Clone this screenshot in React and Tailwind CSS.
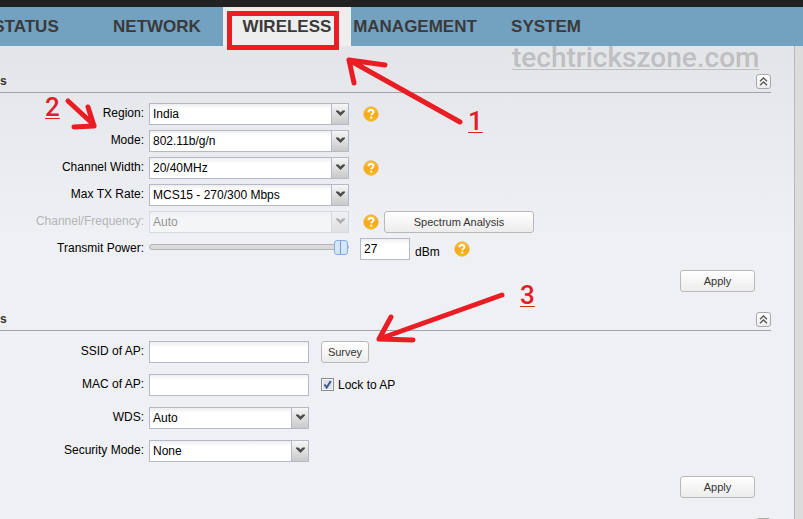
import React, { useState } from 'react';

const tabs = [
  { name: 'STATUS', width: 'w-[130px] -ml-[39px]' },
  { name: 'NETWORK', width: 'w-[132px]' },
  { name: 'WIRELESS', width: 'w-[128px]', active: true },
  { name: 'MANAGEMENT', width: 'w-[128px]' },
  { name: 'SYSTEM', width: 'w-[134px]' },
];

const buttonClass =
  'h-[22px] rounded-[3px] border border-[#b9b9b9] bg-gradient-to-b from-white to-[#ececec] text-[11px] leading-none text-[#333]';

const inputClass =
  'h-[22px] border border-[#b5b8c8] bg-white bg-gradient-to-b from-[#eeeeee] to-white to-25% px-[3px] text-[12px] text-black outline-none';

function Row({ id, label, disabled, children }) {
  return (
    <div className="flex items-center">
      <label
        htmlFor={id}
        className={`w-[144px] shrink-0 pb-[2px] text-right leading-4 ${disabled ? 'text-[#b4b4b6]' : 'text-black'}`}
      >
        {label}:
      </label>
      <div className="ml-[5px] flex h-[22px] items-center">{children}</div>
    </div>
  );
}

function SelectBox({ id, options, wide, disabled }) {
  return (
    <div className={`relative ${wide ? 'w-[200px]' : 'w-[160px]'} ${disabled ? 'opacity-40' : ''}`}>
      <select id={id} disabled={disabled} className={`${inputClass} block w-full appearance-none pr-5`}>
        {options.map((o) => (
          <option key={o}>{o}</option>
        ))}
      </select>
      <span className="pointer-events-none absolute inset-y-0 right-0 flex w-[18px] items-center justify-center border border-[#b5b8c8] bg-gradient-to-b from-[#f6f6f6] to-[#c9c9c9]">
        <svg className="mb-[2px]" width="9" height="6" viewBox="0 0 9 6">
          <path d="M0 0.500H2.500L4.500 2.500L6.500 0.500H9V1.500L4.500 6L0 1.500z" fill="#4a4a4a" />
        </svg>
      </span>
    </div>
  );
}

function Help() {
  return (
    <button type="button" aria-label="Help" className="block">
      <svg width="16" height="16" viewBox="0 0 16 16">
        <defs>
          <linearGradient id="amber" x1="0" y1="0" x2="0" y2="1">
            <stop offset="0" stopColor="#fbc53c" />
            <stop offset="0.500" stopColor="#f8a818" />
            <stop offset="1" stopColor="#fdbb10" />
          </linearGradient>
        </defs>
        <circle cx="8" cy="8" r="7.200" fill="url(#amber)" stroke="#e9a93a" strokeWidth="0.800" />
        <path d="M5.500 6.300C5.500 3.200 10.500 3.200 10.500 6.100C10.500 7.800 8.200 7.700 8.200 9.300" fill="none" stroke="#fff" strokeWidth="1.900" />
        <rect x="7.200" y="10.600" width="2" height="2" fill="#fff" />
      </svg>
    </button>
  );
}

function SectionHeader({ title, onToggle }) {
  return (
    <div className="mr-[23px] flex items-center justify-between border-b border-[#a2a2a8] pt-5 pb-[3px]">
      <h2 className="h-[15px] text-[12px] leading-[15px] font-bold text-[#333]">{title}</h2>
      <button
        type="button"
        aria-label="Collapse section"
        onClick={onToggle}
        className="flex size-[15px] items-center justify-center rounded-[3px] border border-[#a8a8a8] bg-gradient-to-b from-white to-[#eee]"
      >
        <svg width="9" height="9" viewBox="0 0 9 9" fill="none" stroke="#555" strokeWidth="1.300">
          <path d="M1 4.300L4.500 1L8 4.300M1 8.300L4.500 5L8 8.300" />
        </svg>
      </button>
    </div>
  );
}

function Apply({ className }) {
  return (
    <div className={`mr-[39px] flex justify-end ${className}`}>
      <button type="button" className={`${buttonClass} w-[75px]`}>Apply</button>
    </div>
  );
}

function Annotations() {
  return (
    <div className="pointer-events-none absolute inset-0 font-[Roboto,sans-serif] text-[26px] leading-none font-medium">
      <span className="absolute top-[44px] left-[512px] text-[28px] text-[#bfbfc2] underline decoration-1 underline-offset-[2px]">
        techtrickszone.com
      </span>
      <svg className="absolute top-0 left-0" width="803" height="519" fill="none" stroke="#ea1c24" strokeWidth="5" strokeLinecap="round" strokeLinejoin="round">
        <rect x="229.500" y="13.500" width="107" height="34" strokeLinejoin="miter" />
        <path d="M460 122L349 60L385 65M349 60L354 83" />
        <path d="M68 101L94 125M88 107L94 126L74 127" />
        <path d="M502 295L379 339L391 317M379 339L413 340" />
      </svg>
      <span className="absolute top-[94px] left-[45px] text-[#dd2029] underline decoration-1 underline-offset-[2px]">2</span>
      <span className="absolute top-[108px] left-[468px] text-[#dd2029] underline decoration-1 underline-offset-[2px]">1</span>
      <span className="absolute top-[282px] left-[520px] text-[#dd2029] underline decoration-1 underline-offset-[2px]">3</span>
    </div>
  );
}

export default function App() {
  const [power, setPower] = useState(27);
  const [locked, setLocked] = useState(true);

  return (
    <div className="relative flex h-screen flex-col overflow-hidden bg-[#dcdcdd] font-['Liberation_Sans',Arial,sans-serif] text-[12px]">
      <div className="h-[7px] shrink-0 bg-[#222]" />
      <nav className="flex h-[39px] shrink-0 bg-[#73a1c0]">
        {tabs.map((t) => (
          <a
            key={t.name}
            href="#"
            className={`flex shrink-0 items-center justify-center text-[17px] font-bold text-[#3a3a3a] ${t.width} ${t.active ? 'bg-[#eeeeee]' : ''}`}
          >
            {t.name}
          </a>
        ))}
      </nav>

      <main className="mr-2 min-h-0 flex-1 overflow-hidden border-r border-[#b8b8ba] bg-[#eff0f4] bg-gradient-to-b from-[#e4e5e9] to-[#eff0f4] to-40% pt-2">
        <section>
          <SectionHeader title="s" />
          <div className="flex flex-col gap-[5px] pt-[10px]">
            <Row id="region" label="Region">
              <SelectBox id="region" wide options={['India']} />
              <div className="ml-[14px]"><Help /></div>
            </Row>
            <Row id="mode" label="Mode">
              <SelectBox id="mode" wide options={['802.11b/g/n']} />
            </Row>
            <Row id="width" label="Channel Width">
              <SelectBox id="width" wide options={['20/40MHz']} />
              <div className="ml-[14px]"><Help /></div>
            </Row>
            <Row id="rate" label="Max TX Rate">
              <SelectBox id="rate" wide options={['MCS15 - 270/300 Mbps']} />
            </Row>
            <Row id="freq" label="Channel/Frequency" disabled>
              <SelectBox id="freq" wide disabled options={['Auto']} />
              <div className="ml-[14px]"><Help /></div>
              <button type="button" className={`${buttonClass} ml-[5px] w-[150px]`}>Spectrum Analysis</button>
            </Row>
            <Row id="power" label="Transmit Power">
              <input
                id="power"
                type="range"
                min="0"
                max="27"
                value={power}
                onChange={(e) => setPower(Number(e.target.value))}
                className="mb-[4px] h-[6px] w-[200px] appearance-none rounded-full border border-[#b4b4b4] bg-[#dadada] [&::-webkit-slider-thumb]:h-[15px] [&::-webkit-slider-thumb]:w-[14px] [&::-webkit-slider-thumb]:appearance-none [&::-webkit-slider-thumb]:rounded-[3px] [&::-webkit-slider-thumb]:border [&::-webkit-slider-thumb]:border-[#86aede] [&::-webkit-slider-thumb]:bg-[linear-gradient(90deg,#d3e6fb_5px,#6f9bd0_5px,#6f9bd0_6px,#d3e6fb_6px)]"
              />
              <input
                aria-label="Transmit power in dBm"
                value={power}
                onChange={(e) => setPower(Number(e.target.value) || 0)}
                className={`${inputClass} ml-[11px] w-[50px]`}
              />
              <span className="ml-[5px] pt-[5px] text-black">dBm</span>
              <div className="ml-[14px]"><Help /></div>
            </Row>
          </div>
          <Apply className="mt-[10px]" />
        </section>

        <section>
          <SectionHeader title="s" />
          <div className="flex flex-col gap-[11px] pt-[10px]">
            <Row id="ssid" label="SSID of AP">
              <input id="ssid" className={`${inputClass} w-[160px]`} />
              <button type="button" className={`${buttonClass} ml-3 w-[48px]`}>Survey</button>
            </Row>
            <Row id="mac" label="MAC of AP">
              <input id="mac" className={`${inputClass} w-[160px]`} />
              <label className="ml-3 flex items-center gap-[4px] text-black">
                <span className="relative mb-[2px] size-[13px]">
                  <input
                    type="checkbox"
                    checked={locked}
                    onChange={(e) => setLocked(e.target.checked)}
                    className="block size-[13px] appearance-none border border-[#8b8c90] bg-[#dde1ea] shadow-[inset_0_0_0_1px_#f6f6f6]"
                  />
                  {locked && (
                    <svg className="pointer-events-none absolute inset-0" width="13" height="13" viewBox="0 0 13 13">
                      <path d="M3.500 6.500L5.700 9.500L9.800 3" fill="none" stroke="#3c5494" strokeWidth="2" />
                    </svg>
                  )}
                </span>
                Lock to AP
              </label>
            </Row>
            <Row id="wds" label="WDS">
              <SelectBox id="wds" options={['Auto']} />
            </Row>
            <Row id="security" label="Security Mode">
              <SelectBox id="security" options={['None']} />
            </Row>
          </div>
          <Apply className="mt-[14px]" />
        </section>

        <section>
          <SectionHeader title="" />
        </section>
      </main>

      <Annotations />
    </div>
  );
}
